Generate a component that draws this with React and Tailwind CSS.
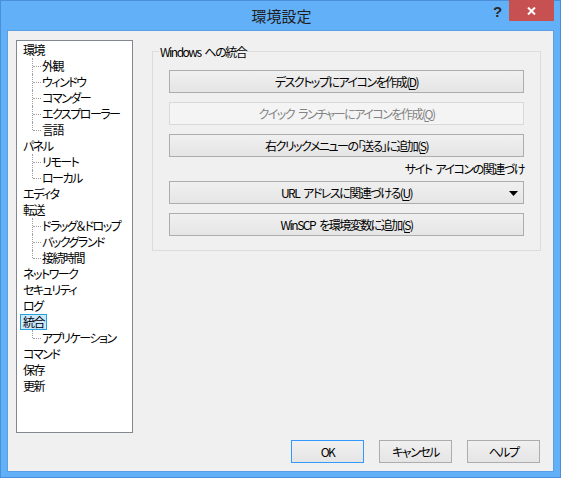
import React from 'react';

const tree = [
    { label: '環境', children: ['外観', 'ウィンドウ', 'コマンダー', 'エクスプローラー', '言語'] },
    { label: 'パネル', children: ['リモート', 'ローカル'] },
    { label: 'エディタ' },
    { label: '転送', children: ['ドラッグ＆ドロップ', 'バックグランド', '接続時間'] },
    { label: 'ネットワーク' },
    { label: 'セキュリティ' },
    { label: 'ログ' },
    { label: '統合', selected: true, children: ['アプリケーション'] },
    { label: 'コマンド' },
    { label: '保存' },
    { label: '更新' }
];

const font = { fontFamily: '"Noto Sans CJK JP", "Noto Sans", sans-serif' };

const Key = ({ k }) => (
    <span>
        (<span className="underline underline-offset-2">{k}</span>)
    </span>
);

// narrow text gets its spaces squeezed by the tracking, so add them back by hand
const Sp = () => <span className="inline-block w-[4px]" />;

const Btn = ({ children, disabled, className = '' }) => (
    <div
        className={`h-[23px] flex items-center justify-center border text-[12px] leading-none whitespace-nowrap ${
            disabled
                ? 'border-[#d9d9d9] bg-[#f4f4f4] text-[#838383]'
                : 'border-[#adadad] bg-linear-to-b from-[#f0f0f0] to-[#e5e5e5] text-black'
        } ${className}`}
    >
        {children}
    </div>
);

const TreeItem = ({ item }) => (
    <div>
        <div className="h-[16px] flex items-center">
            <span
                className={`ml-[2px] h-[16px] px-[2px] border flex items-center leading-none ${
                    item.selected ? 'bg-[#cce8ff] border-[#26a0da]' : 'border-transparent'
                }`}
            >
                {item.label}
            </span>
        </div>
        {item.children &&
            item.children.map((c, i) => {
                const last = i === item.children.length - 1;
                return (
                    <div key={c} className="h-[16px] flex items-center relative">
                        <div
                            className={`absolute left-[14px] top-0 border-l border-dotted border-[#a0a0a0] ${
                                last ? 'h-[8px]' : 'h-[16px]'
                            }`}
                        />
                        <div className="absolute left-[15px] top-[8px] w-[8px] border-t border-dotted border-[#a0a0a0]" />
                        <span className="ml-[24px] leading-none">{c}</span>
                    </div>
                );
            })}
    </div>
);

export default function App() {
    return (
        <div
            style={font}
            className="w-[561px] h-[478px] bg-[#62b0f8] border border-[#4a8fd8] relative select-none whitespace-nowrap [font-feature-settings:'palt']"
        >
            {/* title bar */}
            <div className="h-[29px] flex items-center justify-center">
                <span className="text-[15px] text-[#1e1e1e] leading-none pl-[2px]">環境設定</span>
            </div>
            <div
                className="absolute top-[3px] left-[492px] text-[15px] font-bold text-[#2a2a2a] leading-[16px]"
                style={{ fontFamily: '"Liberation Sans", sans-serif' }}
            >
                ?
            </div>
            <div className="absolute top-[-1px] right-[6px] w-[45px] h-[21px] bg-[#c75050] flex items-center justify-center">
                <svg width="9" height="8" viewBox="0 0 9 8">
                    <path d="M1 0.5 L8 7.5 M8 0.5 L1 7.5" stroke="white" strokeWidth="2" />
                </svg>
            </div>

            {/* client */}
            <div className="ml-[6px] w-[547px] h-[442px] border border-[#5a9fe6] bg-[#f0f0f0] text-[12px] text-black tracking-[-1.5px]">
                <div className="flex pl-[8px] pt-[9px]">
                    <div className="w-[117px] h-[393px] border border-[#828790] bg-white pt-[1px] pl-[1px] overflow-hidden">
                        {tree.map(t => (
                            <TreeItem key={t.label} item={t} />
                        ))}
                    </div>
                    <div className="ml-[19px] mt-[11px] w-[389px] h-[200px] border border-[#dcdcdc] relative px-[16px] pt-[18px]">
                        <span className="absolute -top-[8px] left-[6px] px-[1px] bg-[#f0f0f0] leading-[15px]">
                            Windows<Sp />への統合
                        </span>
                        <Btn>
                            デスクトップにアイコンを作成<Key k="D" />
                        </Btn>
                        <Btn disabled className="mt-[9px]">
                            クイック<Sp />ランチャーにアイコンを作成<Key k="Q" />
                        </Btn>
                        <Btn className="mt-[9px]">
                            右クリックメニューの「送る」に追加<Key k="S" />
                        </Btn>
                        <div className="h-[24px] flex items-center justify-end leading-none">
                            サイト<Sp />アイコンの関連づけ
                        </div>
                        <Btn className="relative">
                            URL<Sp />アドレスに関連づける<Key k="U" />
                            <svg className="absolute right-[5px] top-[9px]" width="9" height="5" viewBox="0 0 9 5">
                                <path d="M0 0 H9 L4.5 5 Z" fill="black" />
                            </svg>
                        </Btn>
                        <Btn className="mt-[9px]">
                            WinSCP<Sp />を環境変数に追加<Key k="S" />
                        </Btn>
                    </div>
                </div>
                <div className="flex justify-end gap-[15px] pr-[13px] mt-[7px]">
                    <Btn className="w-[73px] !border-[#3399ff]">OK</Btn>
                    <Btn className="w-[73px]">キャンセル</Btn>
                    <Btn className="w-[73px]">ヘルプ</Btn>
                </div>
            </div>
        </div>
    );
}
